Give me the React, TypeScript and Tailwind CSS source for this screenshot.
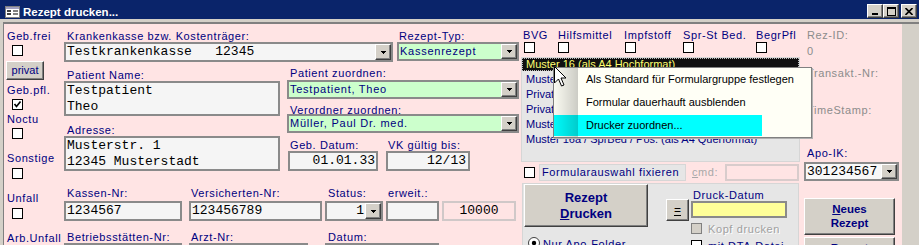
import React from "react";

const LBL = "text-[11px] leading-[12px] tracking-[0.6px] text-[#000080] whitespace-nowrap";
const GLBL = "text-[11px] leading-[12px] tracking-[0.6px] text-[#8c8c8c] whitespace-nowrap";
const MONO = "font-['Liberation_Mono',monospace] text-[13px] leading-[16px] text-black whitespace-pre";
const CTXT = "text-[11px] leading-[15px] tracking-[0.75px] text-[#000080] whitespace-nowrap";
const BTN = "bg-[#d4d0c8] border border-t-white border-l-white border-r-[#404040] border-b-[#404040] shadow-[inset_-1px_-1px_0_#808080]";

function Check({ checked = false }: { checked?: boolean }) {
  return (
    <div className="w-[11px] h-[11px] border border-black bg-white flex items-center justify-center">
      {checked && (
        <svg width="9" height="9" viewBox="0 0 9 9">
          <path d="M1.5 4 L3.5 6.5 L7.5 1.5" stroke="black" strokeWidth="1.7" fill="none" />
        </svg>
      )}
    </div>
  );
}

function DropBtn() {
  return (
    <div className={"w-[16px] h-full flex items-center justify-center " + BTN}>
      <svg width="5" height="3" viewBox="0 0 5 3">
        <path d="M0 0h5v1h-1v1h-1v1h-1v-1h-1v-1h-1z" fill="black" />
      </svg>
    </div>
  );
}

function TitleBtn({ kind }: { kind: "min" | "max" | "close" }) {
  return (
    <div className={"w-[16px] h-[14px] flex items-center justify-center " + BTN}>
      {kind === "min" && (
        <svg width="8" height="8" viewBox="0 0 8 8">
          <rect x="1" y="6" width="6" height="2" fill="black" />
        </svg>
      )}
      {kind === "max" && (
        <svg width="9" height="9" viewBox="0 0 9 9">
          <rect x="0.5" y="0.5" width="8" height="8" fill="none" stroke="black" />
          <rect x="0" y="0" width="9" height="2" fill="black" />
        </svg>
      )}
      {kind === "close" && (
        <svg width="8" height="7" viewBox="0 0 8 7">
          <path d="M0.5 0 L7.5 7 M7.5 0 L0.5 7" stroke="black" strokeWidth="1.6" />
        </svg>
      )}
    </div>
  );
}

function TitleIcon() {
  return (
    <svg width="15" height="12" viewBox="0 0 15 12">
      <rect x="0.5" y="0.5" width="14" height="11" fill="#ffffff" stroke="#808080" />
      <rect x="1" y="1" width="13" height="2" fill="#a0a0c0" />
      <rect x="2" y="4" width="4" height="2" fill="#404040" />
      <rect x="2" y="7" width="4" height="2" fill="#404040" />
      <rect x="8" y="4" width="5" height="2" fill="#808080" />
      <rect x="8" y="7" width="5" height="2" fill="#808080" />
    </svg>
  );
}

function ColA() {
  return (
    <div className="w-[60px] shrink-0 flex flex-col items-start">
      <div className={LBL + " mt-[6px] pl-[3px]"}>Geb.frei</div>
      <div className="mt-[3px] ml-[8px]"><Check /></div>
      <div className={"mt-[5px] ml-[2px] w-[38px] h-[19px] flex items-center justify-center text-[11px] text-[#000080] " + BTN}>privat</div>
      <div className={LBL + " mt-[4px] pl-[3px]"}>Geb.pfl.</div>
      <div className="mt-[3px] ml-[8px]"><Check checked /></div>
      <div className={LBL + " mt-[3px] pl-[3px]"}>Noctu</div>
      <div className="mt-[3px] ml-[8px]"><Check /></div>
      <div className={LBL + " mt-[13px] pl-[3px]"}>Sonstige</div>
      <div className="mt-[4px] ml-[8px]"><Check /></div>
      <div className={LBL + " mt-[13px] pl-[3px]"}>Unfall</div>
      <div className="mt-[4px] ml-[8px]"><Check /></div>
      <div className={LBL + " mt-[13px] pl-[3px]"}>Arb.Unfall</div>
    </div>
  );
}

function ColB() {
  return (
    <div className="w-[456px] shrink-0 flex flex-col">
      {/* Row 1 */}
      <div className="flex">
        <div className="w-[329px] flex flex-col">
          <div className={LBL + " mt-[6px] pl-[3px]"}>Krankenkasse bzw. Kostenträger:</div>
          <div className="h-[20px] border-2 border-[#8a8a8a] bg-[#f5f5f5] flex">
            <div className={MONO + " flex-1 pl-[1px]"}>{"Testkrankenkasse   12345"}</div>
            <DropBtn />
          </div>
        </div>
        <div className="ml-[4px] w-[122px] flex flex-col">
          <div className={LBL + " mt-[6px] pl-[2px]"}>Rezept-Typ:</div>
          <div className="h-[19px] border-2 border-[#8a8a8a] bg-[#ccffcc] flex">
            <div className={CTXT + " flex-1 pl-[1px]"}>Kassenrezept</div>
            <DropBtn />
          </div>
        </div>
      </div>
      {/* Row 2/3 */}
      <div className="flex">
        <div className="w-[216px] flex flex-col">
          <div className={LBL + " mt-[7px] pl-[3px]"}>Patient Name:</div>
          <div className="h-[35px] border-2 border-[#8a8a8a] bg-[#f5f5f5]">
            <div className={MONO + " pl-[1px]"}>Testpatient</div>
            <div className={MONO + " pl-[1px]"}>Theo</div>
          </div>
          <div className={LBL + " mt-[8px] pl-[3px]"}>Adresse:</div>
          <div className="h-[35px] border-2 border-[#8a8a8a] bg-[#f5f5f5]">
            <div className={MONO + " pl-[1px]"}>Musterstr. 1</div>
            <div className={MONO + " pl-[1px]"}>12345 Musterstadt</div>
          </div>
        </div>
        <div className="ml-[7px] w-[232px] flex flex-col">
          <div className={LBL + " mt-[5px] pl-[3px]"}>Patient zuordnen:</div>
          <div className="mt-[1px] h-[19px] border-2 border-[#8a8a8a] bg-[#ccffcc] flex">
            <div className={CTXT + " flex-1 pl-[1px]"}>Testpatient, Theo</div>
            <DropBtn />
          </div>
          <div className={LBL + " mt-[5px] pl-[3px]"}>Verordner zuordnen:</div>
          <div className="mt-[-2px] h-[19px] border-2 border-[#8a8a8a] bg-[#ccffcc] flex">
            <div className={CTXT + " flex-1 pl-[1px]"}>Müller, Paul Dr. med.</div>
            <DropBtn />
          </div>
          <div className="mt-[6px] flex">
            <div className="ml-[1px] w-[90px] flex flex-col">
              <div className={LBL + " pl-[2px]"}>Geb. Datum:</div>
              <div className="h-[20px] border-2 border-[#8a8a8a] bg-[#f5f5f5]">
                <div className={MONO + " text-right pr-[1px]"}>01.01.33</div>
              </div>
            </div>
            <div className="ml-[8px] w-[84px] flex flex-col">
              <div className={LBL + " pl-[2px]"}>VK gültig bis:</div>
              <div className="h-[20px] border-2 border-[#8a8a8a] bg-[#f5f5f5]">
                <div className={MONO + " text-right pr-[2px]"}>12/13</div>
              </div>
            </div>
          </div>
        </div>
      </div>
      {/* Row 4 */}
      <div className="flex mt-[16px]">
        <div className="w-[118px] flex flex-col">
          <div className={LBL + " pl-[3px]"}>Kassen-Nr:</div>
          <div className="mt-[2px] h-[20px] border-2 border-[#8a8a8a] bg-[#f5f5f5]">
            <div className={MONO + " pl-[1px]"}>1234567</div>
          </div>
        </div>
        <div className="ml-[7px] w-[133px] flex flex-col">
          <div className={LBL + " pl-[2px]"}>Versicherten-Nr:</div>
          <div className="mt-[2px] h-[20px] border-2 border-[#8a8a8a] bg-[#f5f5f5]">
            <div className={MONO + " pl-[1px]"}>123456789</div>
          </div>
        </div>
        <div className="ml-[3px] w-[58px] flex flex-col">
          <div className={LBL + " pl-[3px]"}>Status:</div>
          <div className="mt-[2px] h-[20px] border-2 border-[#8a8a8a] bg-[#f5f5f5] flex">
            <div className={MONO + " flex-1 text-right pr-[1px]"}>1</div>
            <DropBtn />
          </div>
        </div>
        <div className="ml-[3px] w-[53px] flex flex-col">
          <div className={LBL + " pl-[2px]"}>erweit.:</div>
          <div className="mt-[2px] h-[20px] border-2 border-[#8a8a8a] bg-[#f5f5f5]" />
        </div>
        <div className="ml-[3px] w-[74px] flex flex-col">
          <div className="h-[12px]" />
          <div className="mt-[2px] h-[20px] border-2 border-[#d0c8c8] bg-[#ffe4e4]">
            <div className={MONO + " text-center"}>10000</div>
          </div>
        </div>
      </div>
      {/* Row 5 */}
      <div className="flex mt-[10px]">
        <div className="w-[118px] flex flex-col">
          <div className={LBL + " pl-[3px]"}>Betriebsstätten-Nr:</div>
          <div className="h-[20px] border-2 border-[#8a8a8a] bg-[#f5f5f5]" />
        </div>
        <div className="ml-[7px] w-[119px] flex flex-col">
          <div className={LBL + " pl-[2px]"}>Arzt-Nr:</div>
          <div className="h-[20px] border-2 border-[#8a8a8a] bg-[#f5f5f5]" />
        </div>
        <div className="ml-[17px] w-[114px] flex flex-col">
          <div className={LBL + " pl-[3px]"}>Datum:</div>
          <div className="h-[20px] border-2 border-[#8a8a8a] bg-[#ffff99]" />
        </div>
      </div>
    </div>
  );
}

function ColC() {
  const items = [
    "Muster 16 (als A4 Querformat)",
    "Privatrezept (als A4 Hochformat)",
    "Privatrezept (als A4 Querformat)",
    "Muster 16a / SprBed / Pos. (als A4 Hochformat)",
    "Muster 16a / SprBed / Pos. (als A4 Querformat)",
  ];
  return (
    <div className="ml-[1px] w-[279px] shrink-0 flex flex-col">
      <div className="mt-[5px] flex">
        <div className="ml-[2px] w-[35px] flex flex-col">
          <div className={LBL}>BVG</div>
          <div className="mt-[1px] ml-[1px]"><Check /></div>
        </div>
        <div className="w-[66px] flex flex-col">
          <div className={LBL}>Hilfsmittel</div>
          <div className="mt-[1px]"><Check /></div>
        </div>
        <div className="w-[59px] flex flex-col">
          <div className={LBL}>Impfstoff</div>
          <div className="mt-[1px] ml-[1px]"><Check /></div>
        </div>
        <div className="w-[73px] flex flex-col">
          <div className={LBL}>Spr-St Bed.</div>
          <div className="mt-[1px]"><Check /></div>
        </div>
        <div className="flex flex-col">
          <div className={LBL}>BegrPfl</div>
          <div className="mt-[1px]"><Check /></div>
        </div>
      </div>
      {/* list */}
      <div className="mt-[4px] h-[105px] bg-[#e6e6e6] border border-[#d6d6d6] overflow-hidden">
        <div className="h-[13px] bg-[#101010] border border-dotted border-[#bdbdbd] pl-[3px] text-[11px] leading-[11px] text-[#ffff70] whitespace-nowrap">
          Muster 16 (als A4 Hochformat)
        </div>
        <div className="mt-[1px]">
          {items.map((t) => (
            <div key={t} className="pl-[4px] text-[11px] leading-[15px] text-[#000080] whitespace-nowrap">{t}</div>
          ))}
        </div>
      </div>
      {/* fix row */}
      <div className="mt-[2px] h-[17px] flex items-center">
        <div className="ml-[3px]"><Check /></div>
        <div className="ml-[4px] w-[147px] h-[17px] bg-[#e6e6e6] border border-[#d6d6d6] pl-[2px] text-[11px] leading-[15px] tracking-[0.6px] text-[#000080] whitespace-nowrap">
          Formularauswahl fixieren
        </div>
        <div className="ml-[6px] text-[11px] leading-[15px] tracking-[0.6px] text-[#a8a8a8]"><span className="underline">c</span>md:</div>
        <div className="ml-auto mr-[1px] w-[74px] h-[17px] border-2 border-[#d8cccc] bg-[#ffe4e4]" />
      </div>
      {/* lower panel */}
      <div className="mt-[2px] ml-[1px] w-[277px] h-[70px] bg-[#e6e6e6] border border-[#d6d6d6] flex">
        <div className="flex flex-col">
          <div className={"ml-[1px] w-[124px] h-[43px] flex flex-col items-center justify-center font-bold text-[13px] leading-[16px] text-[#000080] " + BTN}>
            <div>Rezept</div>
            <div><span className="underline">D</span>rucken</div>
          </div>
          <div className="mt-[10px] ml-[5px] flex items-start">
            <svg width="12" height="12" viewBox="0 0 12 12">
              <circle cx="6" cy="6" r="5.5" fill="white" stroke="#404040" />
              <circle cx="6" cy="6" r="2.2" fill="black" />
            </svg>
            <div className={LBL + " ml-[3px] mt-[1px]"}>Nur Apo-Folder</div>
          </div>
        </div>
        <div className={"ml-[18px] mt-[15px] w-[23px] h-[22px] flex items-center justify-center text-[12px] text-black " + BTN}>
          <span className="underline leading-[12px]">=</span>
        </div>
        <div className="ml-[2px] flex flex-col">
          <div className={LBL + " mt-[5px] pl-[2px]"}>Druck-Datum</div>
          <div className="w-[96px] h-[20px] border-2 border-[#8a8a8a] bg-[#ffff99]" />
          <div className="mt-[5px] flex items-start">
            <div className="w-[11px] h-[11px] border border-[#808080] bg-[#d4d0c8]" />
            <div className="ml-[6px] text-[11px] leading-[12px] tracking-[0.6px] text-[#a0a0a0] [text-shadow:1px_1px_0_#ffffff] whitespace-nowrap">Kopf drucken</div>
          </div>
          <div className="mt-[5px] flex items-start">
            <Check />
            <div className={LBL + " ml-[6px]"}>mit DTA-Datei</div>
          </div>
        </div>
      </div>
    </div>
  );
}

function ColD() {
  return (
    <div className="ml-[4px] w-[96px] shrink-0 flex flex-col">
      <div className={GLBL + " mt-[5px] pl-[3px]"}>Rez-ID:</div>
      <div className={GLBL + " mt-[4px] pl-[3px]"}>0</div>
      <div className={GLBL + " mt-[10px] pl-[3px]"}>Transakt.-Nr:</div>
      <div className={GLBL + " mt-[25px] pl-[3px]"}>TimeStamp:</div>
      <div className={LBL + " mt-[31px] pl-[3px]"}>Apo-IK:</div>
      <div className="mt-[3px] w-[95px] h-[19px] border-2 border-[#8a8a8a] bg-[#f8f8f8] flex">
        <div className={MONO + " flex-1 pl-[1px] leading-[15px]"}>301234567</div>
        <DropBtn />
      </div>
      <div className={"mt-[17px] w-[91px] h-[37px] flex flex-col items-center justify-center font-bold text-[11.5px] leading-[13.5px] text-[#000080] " + BTN}>
        <div><span className="underline">N</span>eues</div>
        <div>Rezept</div>
      </div>
      <div className={"mt-[2px] w-[91px] h-[37px] flex flex-col items-center pt-[4px] font-bold text-[11.5px] leading-[13.5px] text-[#000080] " + BTN}>
        <div>Rezept</div>
        <div>löschen</div>
      </div>
    </div>
  );
}

export default function App() {
  return (
    <div className="relative w-[919px] h-[245px] overflow-hidden bg-[#d4d0c8] font-['Liberation_Sans',Arial,sans-serif]">
      {/* Title bar */}
      <div className="h-[19px] bg-[#0a246a] flex items-start">
        <div className="ml-[5px] mt-[6px]"><TitleIcon /></div>
        <div className="ml-[3px] mt-[6px] text-white font-bold text-[11.5px] leading-[13px] whitespace-nowrap">Rezept drucken...</div>
        <div className="ml-auto mr-[2px] mt-[4px] flex">
          <TitleBtn kind="min" />
          <TitleBtn kind="max" />
          <div className="w-[2px]" />
          <TitleBtn kind="close" />
        </div>
      </div>
      <div className="h-[3px]" />
      {/* Client area */}
      <div className="ml-[3px] h-[223px] border-l border-t-2 border-[#808080] flex">
        <div className="w-[898px] h-full bg-[#ffe4e4] flex items-start">
          <ColA />
          <ColB />
          <ColC />
          <ColD />
        </div>
        <div className="flex-1 bg-[#d4d0c8]" />
      </div>

      {/* Context menu */}
      <div className="absolute left-[553px] top-[67px] w-[259px] h-[71px] bg-[#fffff6] border border-[#808080] shadow-[1px_1px_0_#b0b0b0]">
        <div className="h-[23px] pl-[32px] text-[11px] leading-[23px] text-black whitespace-nowrap">Als Standard für Formulargruppe festlegen</div>
        <div className="h-[23px] pl-[32px] text-[11px] leading-[23px] text-black whitespace-nowrap">Formular dauerhauft ausblenden</div>
        <div className="mt-[1px] h-[21px] w-[208px] bg-[#00ffff] pl-[32px] text-[11px] leading-[21px] text-black whitespace-nowrap">Drucker zuordnen...</div>
        <div className="absolute left-0 top-0 bottom-0 w-[24px] bg-linear-to-r from-black/[0.02] to-black/[0.2]" />
      </div>

      {/* Cursor */}
      <svg className="absolute left-[554px] top-[66px]" width="13" height="21" viewBox="0 0 13 21">
        <path d="M0.5 0.5 V17 L4.5 13 L7.5 20 L10 19 L7 12 H12 Z" fill="white" stroke="black" strokeWidth="1" />
      </svg>
    </div>
  );
}
